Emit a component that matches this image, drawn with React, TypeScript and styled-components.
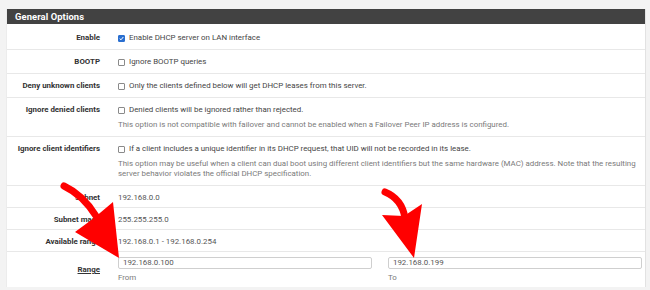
import styled, { createGlobalStyle } from 'styled-components';

const GlobalStyle = createGlobalStyle`
	body {
		margin: 0;
		background: #f3f3f3;
		font-family: Roboto, "Liberation Sans", sans-serif;
	}
`;

const Panel = styled.section`
	position: relative;
	width: 640px;
	margin: 9px 0 0 6px;
	background: #fff;
	border-right: 1px solid #e2e2e2;
	border-left: 1px solid #ececec;
	box-sizing: border-box;
`;

const Heading = styled.h2`
	margin: 0;
	height: 15px;
	line-height: 15px;
	padding-left: 8px;
	background: #424242;
	color: #fff;
	font-size: 9.4px;
	font-weight: 700;
	letter-spacing: 0.1px;
`;

const Row = styled.div<{ $first?: boolean; $compact?: boolean }>`
	display: grid;
	grid-template-columns: 93px 1fr;
	column-gap: 18px;
	padding: ${p => p.$first ? '9px 3px 6px 0' : p.$compact ? '7px 3px 4px 0' : '7px 3px 6px 0'};
	border-top: ${p => p.$first ? 'none' : '1px solid #e8e8e8'};
	line-height: 10px;
`;

const Label = styled.div<{ $underline?: boolean }>`
	text-align: right;
	font-size: 7.9px;
	font-weight: 700;
	color: #333;
	text-decoration: ${p => p.$underline ? 'underline' : 'none'};
	align-self: ${p => p.$underline ? 'center' : 'start'};
`;

const Field = styled.div`
	font-size: 7.9px;
	color: #444;
`;

const CheckLine = styled.label`
	display: flex;
	align-items: center;
	gap: 4px;
`;

const Box = styled.span<{ $on?: boolean }>`
	display: inline-flex;
	align-items: center;
	justify-content: center;
	flex: none;
	width: 7px;
	height: 7px;
	box-sizing: border-box;
	border-radius: 1px;
	border: 1px solid ${p => p.$on ? '#2a6fd0' : '#8a8a8a'};
	background: ${p => p.$on ? '#2a6fd0' : '#fff'};
`;

const Help = styled.p`
	margin: 5px 0 0;
	font-size: 7.9px;
	color: #7a7a7a;
`;

const Value = styled.div`
	font-size: 7.9px;
	color: #555;
`;

const Pair = styled.div`
	display: grid;
	grid-template-columns: 1fr 1fr;
	column-gap: 16px;
`;

const Input = styled.div`
	height: 12px;
	box-sizing: border-box;
	border: 1px solid #cfcfcf;
	border-radius: 2px;
	padding-left: 4px;
	line-height: 10px;
	font-size: 7.9px;
	color: #555;
`;

const Caption = styled.div`
	margin-top: 4px;
	font-size: 7.9px;
	color: #7a7a7a;
`;

const Arrows = styled.svg`
	position: absolute;
	left: -6px;
	top: -9px;
	pointer-events: none;
`;

function Check({ on, children }: { on?: boolean; children: React.ReactNode }) {
	return (
		<CheckLine>
			<Box $on={on}>
				{on && <svg width="5" height="5" viewBox="0 0 5 5"><path d="M0.7 2.6 L2 3.8 L4.3 1" stroke="#fff" strokeWidth="1" fill="none" /></svg>}
			</Box>
			{children}
		</CheckLine>
	);
}

function App() {
	return (
		<>
			<GlobalStyle />
			<Panel>
				<Heading>General Options</Heading>
				<Row $first>
					<Label>Enable</Label>
					<Field><Check on>Enable DHCP server on LAN interface</Check></Field>
				</Row>
				<Row>
					<Label>BOOTP</Label>
					<Field><Check>Ignore BOOTP queries</Check></Field>
				</Row>
				<Row>
					<Label>Deny unknown clients</Label>
					<Field><Check>Only the clients defined below will get DHCP leases from this server.</Check></Field>
				</Row>
				<Row>
					<Label>Ignore denied clients</Label>
					<Field>
						<Check>Denied clients will be ignored rather than rejected.</Check>
						<Help>This option is not compatible with failover and cannot be enabled when a Failover Peer IP address is configured.</Help>
					</Field>
				</Row>
				<Row>
					<Label>Ignore client identifiers</Label>
					<Field>
						<Check>If a client includes a unique identifier in its DHCP request, that UID will not be recorded in its lease.</Check>
						<Help>This option may be useful when a client can dual boot using different client identifiers but the same hardware (MAC) address. Note that the resulting server behavior violates the official DHCP specification.</Help>
					</Field>
				</Row>
				<Row $compact>
					<Label>Subnet</Label>
					<Value>192.168.0.0</Value>
				</Row>
				<Row $compact>
					<Label>Subnet mask</Label>
					<Value>255.255.255.0</Value>
				</Row>
				<Row $compact>
					<Label>Available range</Label>
					<Value>192.168.0.1 - 192.168.0.254</Value>
				</Row>
				<Row style={{ paddingTop: 5, paddingBottom: 4 }}>
					<Label $underline>Range</Label>
					<Pair>
						<div>
							<Input>192.168.0.100</Input>
							<Caption>From</Caption>
						</div>
						<div>
							<Input>192.168.0.199</Input>
							<Caption>To</Caption>
						</div>
					</Pair>
				</Row>
				<Arrows width="650" height="290" viewBox="0 0 650 290">
					<path d="M63 186 Q82 195 95 216" stroke="#f00" strokeWidth="7" strokeLinecap="round" fill="none" />
					<path d="M74 232 L93 218 L112 202 L118 258 Z" fill="#f00" />
					<path d="M384 192 Q401 199 404 218" stroke="#f00" strokeWidth="7" strokeLinecap="round" fill="none" />
					<path d="M381 215 L403 216 L421 204 L413 258 Z" fill="#f00" />
				</Arrows>
			</Panel>
		</>
	);
}

export default App;
